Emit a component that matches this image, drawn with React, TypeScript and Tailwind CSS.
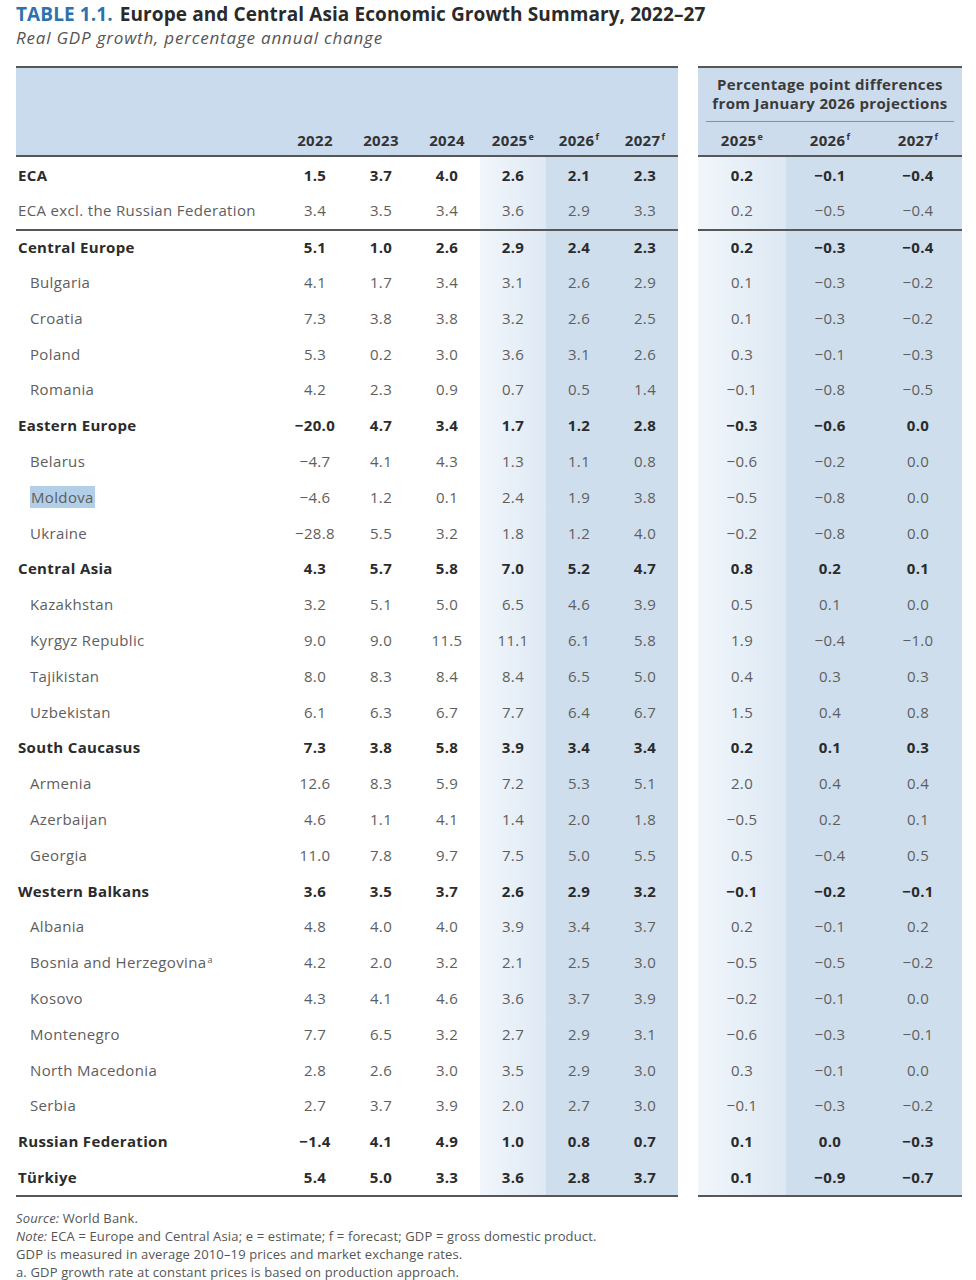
import React from 'react';

type Row = {
  name: string;
  vals: string[];
  diffs: string[];
  kind: 'total' | 'sub' | 'country';
  sup?: string;
  highlight?: boolean;
  ruleAbove?: boolean;
};

const rows: Row[] = [
  { name: 'ECA', vals: ['1.5', '3.7', '4.0', '2.6', '2.1', '2.3'], diffs: ['0.2', '−0.1', '−0.4'], kind: 'total' },
  { name: 'ECA excl. the Russian Federation', vals: ['3.4', '3.5', '3.4', '3.6', '2.9', '3.3'], diffs: ['0.2', '−0.5', '−0.4'], kind: 'sub' },
  { name: 'Central Europe', vals: ['5.1', '1.0', '2.6', '2.9', '2.4', '2.3'], diffs: ['0.2', '−0.3', '−0.4'], kind: 'total', ruleAbove: true },
  { name: 'Bulgaria', vals: ['4.1', '1.7', '3.4', '3.1', '2.6', '2.9'], diffs: ['0.1', '−0.3', '−0.2'], kind: 'country' },
  { name: 'Croatia', vals: ['7.3', '3.8', '3.8', '3.2', '2.6', '2.5'], diffs: ['0.1', '−0.3', '−0.2'], kind: 'country' },
  { name: 'Poland', vals: ['5.3', '0.2', '3.0', '3.6', '3.1', '2.6'], diffs: ['0.3', '−0.1', '−0.3'], kind: 'country' },
  { name: 'Romania', vals: ['4.2', '2.3', '0.9', '0.7', '0.5', '1.4'], diffs: ['−0.1', '−0.8', '−0.5'], kind: 'country' },
  { name: 'Eastern Europe', vals: ['−20.0', '4.7', '3.4', '1.7', '1.2', '2.8'], diffs: ['−0.3', '−0.6', '0.0'], kind: 'total' },
  { name: 'Belarus', vals: ['−4.7', '4.1', '4.3', '1.3', '1.1', '0.8'], diffs: ['−0.6', '−0.2', '0.0'], kind: 'country' },
  { name: 'Moldova', vals: ['−4.6', '1.2', '0.1', '2.4', '1.9', '3.8'], diffs: ['−0.5', '−0.8', '0.0'], kind: 'country', highlight: true },
  { name: 'Ukraine', vals: ['−28.8', '5.5', '3.2', '1.8', '1.2', '4.0'], diffs: ['−0.2', '−0.8', '0.0'], kind: 'country' },
  { name: 'Central Asia', vals: ['4.3', '5.7', '5.8', '7.0', '5.2', '4.7'], diffs: ['0.8', '0.2', '0.1'], kind: 'total' },
  { name: 'Kazakhstan', vals: ['3.2', '5.1', '5.0', '6.5', '4.6', '3.9'], diffs: ['0.5', '0.1', '0.0'], kind: 'country' },
  { name: 'Kyrgyz Republic', vals: ['9.0', '9.0', '11.5', '11.1', '6.1', '5.8'], diffs: ['1.9', '−0.4', '−1.0'], kind: 'country' },
  { name: 'Tajikistan', vals: ['8.0', '8.3', '8.4', '8.4', '6.5', '5.0'], diffs: ['0.4', '0.3', '0.3'], kind: 'country' },
  { name: 'Uzbekistan', vals: ['6.1', '6.3', '6.7', '7.7', '6.4', '6.7'], diffs: ['1.5', '0.4', '0.8'], kind: 'country' },
  { name: 'South Caucasus', vals: ['7.3', '3.8', '5.8', '3.9', '3.4', '3.4'], diffs: ['0.2', '0.1', '0.3'], kind: 'total' },
  { name: 'Armenia', vals: ['12.6', '8.3', '5.9', '7.2', '5.3', '5.1'], diffs: ['2.0', '0.4', '0.4'], kind: 'country' },
  { name: 'Azerbaijan', vals: ['4.6', '1.1', '4.1', '1.4', '2.0', '1.8'], diffs: ['−0.5', '0.2', '0.1'], kind: 'country' },
  { name: 'Georgia', vals: ['11.0', '7.8', '9.7', '7.5', '5.0', '5.5'], diffs: ['0.5', '−0.4', '0.5'], kind: 'country' },
  { name: 'Western Balkans', vals: ['3.6', '3.5', '3.7', '2.6', '2.9', '3.2'], diffs: ['−0.1', '−0.2', '−0.1'], kind: 'total' },
  { name: 'Albania', vals: ['4.8', '4.0', '4.0', '3.9', '3.4', '3.7'], diffs: ['0.2', '−0.1', '0.2'], kind: 'country' },
  { name: 'Bosnia and Herzegovina', sup: 'a', vals: ['4.2', '2.0', '3.2', '2.1', '2.5', '3.0'], diffs: ['−0.5', '−0.5', '−0.2'], kind: 'country' },
  { name: 'Kosovo', vals: ['4.3', '4.1', '4.6', '3.6', '3.7', '3.9'], diffs: ['−0.2', '−0.1', '0.0'], kind: 'country' },
  { name: 'Montenegro', vals: ['7.7', '6.5', '3.2', '2.7', '2.9', '3.1'], diffs: ['−0.6', '−0.3', '−0.1'], kind: 'country' },
  { name: 'North Macedonia', vals: ['2.8', '2.6', '3.0', '3.5', '2.9', '3.0'], diffs: ['0.3', '−0.1', '0.0'], kind: 'country' },
  { name: 'Serbia', vals: ['2.7', '3.7', '3.9', '2.0', '2.7', '3.0'], diffs: ['−0.1', '−0.3', '−0.2'], kind: 'country' },
  { name: 'Russian Federation', vals: ['−1.4', '4.1', '4.9', '1.0', '0.8', '0.7'], diffs: ['0.1', '0.0', '−0.3'], kind: 'total' },
  { name: 'Türkiye', vals: ['5.4', '5.0', '3.3', '3.6', '2.8', '3.7'], diffs: ['0.1', '−0.9', '−0.7'], kind: 'total' },
];

const years = [
  { y: '2022' },
  { y: '2023' },
  { y: '2024' },
  { y: '2025', s: 'e' },
  { y: '2026', s: 'f' },
  { y: '2027', s: 'f' },
];

const leftBg = [
  '',
  '',
  '',
  'bg-gradient-to-r from-[#f1f6fb] to-[#dfe9f4]',
  'bg-[#cfdeed]',
  'bg-[#cfdeed]',
];
const rightBg = ['bg-gradient-to-r from-[#f1f6fb] to-[#dde8f3]', 'bg-[#cfdeed]', 'bg-[#cfdeed]'];

function YearLabel({ y, s }: { y: string; s?: string }) {
  return (
    <span>
      {y}
      {s && <sup className="text-[9px] ml-[1px] top-[-6px]">{s}</sup>}
    </span>
  );
}

export default function App() {
  const font = { fontFamily: '"Open Sans", Lato, sans-serif' };

  const textClass = (r: Row) =>
    r.kind === 'total' ? 'font-bold text-[#2b2b2b]' : 'text-[#5e5e5e]';

  return (
    <div className="bg-white w-[976px] min-h-[1280px] px-4 pt-[2px]" style={font}>
      {/* title */}
      <div className="text-[19px] leading-[24px] font-bold text-[#2a2a2a] whitespace-nowrap tracking-[0.1px]">
        <span className="text-[#2d72ad]">TABLE 1.1.</span>
        <span className="ml-[7px]">Europe and Central Asia Economic Growth Summary, 2022–27</span>
      </div>
      <div className="text-[17px] leading-[24px] italic text-[#555] tracking-[0.8px]">
        Real GDP growth, percentage annual change
      </div>

      <div className="flex mt-[16px] tracking-[0.35px]">
        {/* left table */}
        <div className="w-[662px] border-t-2 border-b-2 border-[#575757]">
          <div className="h-[89px] bg-[#c9dbed] border-b-2 border-[#575757] flex items-end">
            <div className="flex h-[30px] items-center w-full text-[15px] font-bold text-[#333]">
              <div className="w-[266px]" />
              {years.map((c) => (
                <div key={c.y} className="w-[66px] text-center">
                  <YearLabel y={c.y} s={c.s} />
                </div>
              ))}
            </div>
          </div>
          {rows.map((r) => (
            <div
              key={r.name}
              className={`flex h-[35.8px] items-center text-[15px] ${textClass(r)} ${
                r.ruleAbove ? 'border-t-2 border-[#575757]' : ''
              }`}
            >
              <div className={`w-[266px] h-full flex items-center ${r.kind === 'country' ? 'pl-[14px]' : 'pl-[2px]'}`}>
                <span className={r.highlight ? 'bg-[#b3cfe8] px-[1px] leading-[22px]' : ''}>
                  {r.name}
                  {r.sup && <sup className="text-[9px] ml-[1px] top-[-5px]">{r.sup}</sup>}
                </span>
              </div>
              {r.vals.map((v, j) => (
                <div key={j} className={`w-[66px] h-full flex items-center justify-center ${leftBg[j]}`}>
                  {v}
                </div>
              ))}
            </div>
          ))}
        </div>

        {/* right table */}
        <div className="w-[264px] ml-[20px] border-t-2 border-b-2 border-[#575757]">
          <div className="h-[89px] bg-[#cddcec] border-b-2 border-[#575757] flex flex-col">
            <div className="pt-[7px] text-center text-[15px] leading-[19px] font-bold text-[#3a3a3a]">
              <div>Percentage point differences</div>
              <div>from January 2026 projections</div>
            </div>
            <div className="mx-[8px] mt-[8px] border-t border-[#8a8f96]" />
            <div className="flex h-[30px] mt-auto items-center text-[15px] font-bold text-[#333]">
              {years.slice(3).map((c) => (
                <div key={c.y} className="w-[88px] text-center">
                  <YearLabel y={c.y} s={c.s} />
                </div>
              ))}
            </div>
          </div>
          {rows.map((r) => (
            <div
              key={r.name}
              className={`flex h-[35.8px] items-center text-[15px] ${textClass(r)} ${
                r.ruleAbove ? 'border-t-2 border-[#575757]' : ''
              }`}
            >
              {r.diffs.map((v, j) => (
                <div key={j} className={`w-[88px] h-full flex items-center justify-center ${rightBg[j]}`}>
                  {v}
                </div>
              ))}
            </div>
          ))}
        </div>
      </div>

      {/* notes */}
      <div className="mt-[12px] text-[13px] leading-[18px] text-[#555] tracking-[0.15px]">
        <div>
          <span className="italic">Source:</span> World Bank.
        </div>
        <div>
          <span className="italic">Note:</span> ECA = Europe and Central Asia; e = estimate; f = forecast; GDP = gross
          domestic product.
        </div>
        <div>GDP is measured in average 2010–19 prices and market exchange rates.</div>
        <div>a. GDP growth rate at constant prices is based on production approach.</div>
      </div>
    </div>
  );
}
